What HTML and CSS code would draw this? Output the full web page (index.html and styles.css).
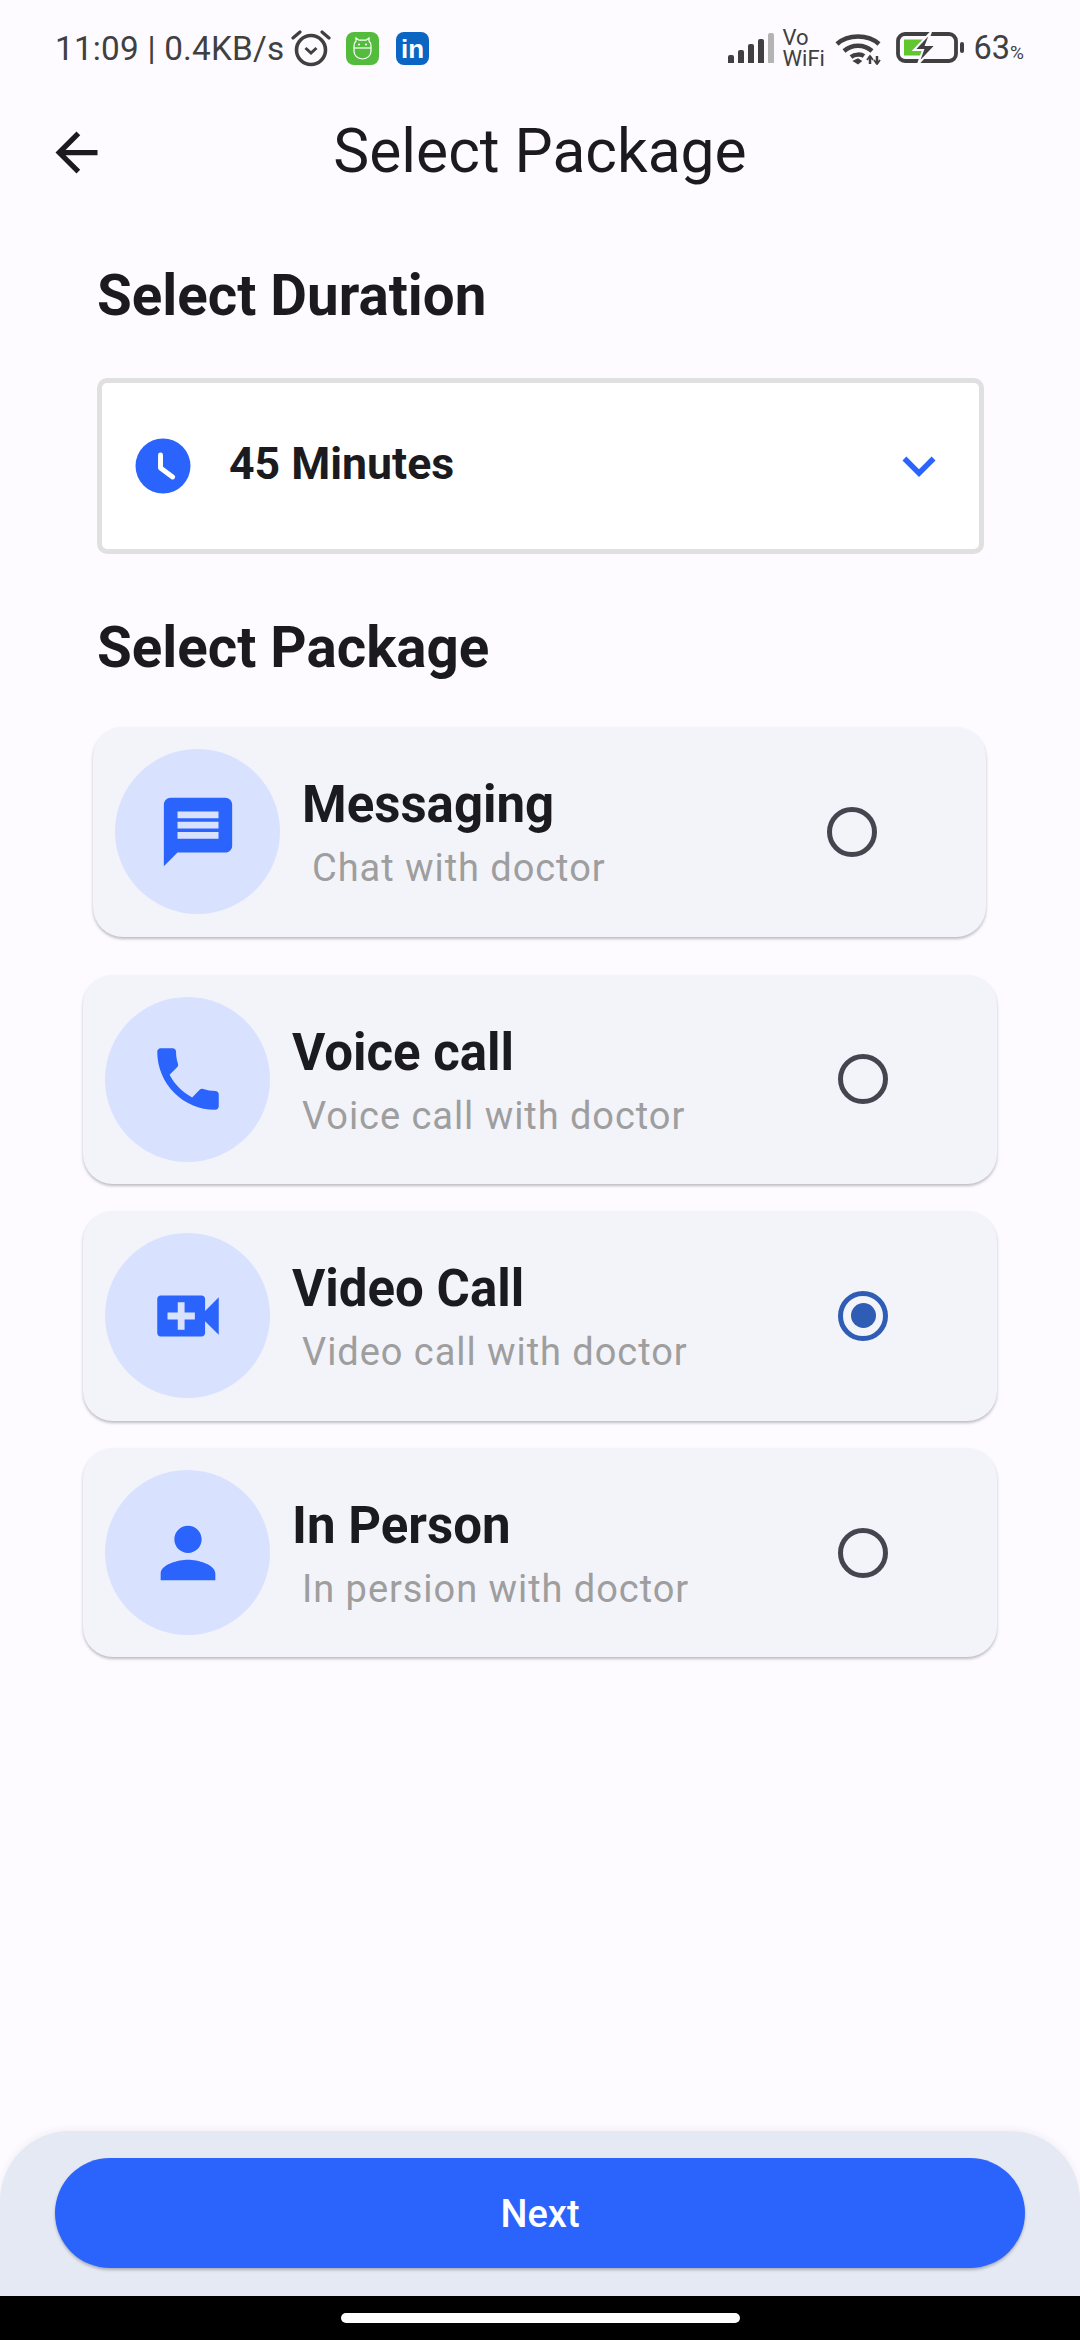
FILE: index.html
```html
<!DOCTYPE html>
<html>

<head>
    <meta charset="utf-8">
    <meta name="viewport" content="width=device-width, initial-scale=1">
    <title>Select Package</title>
    <link rel="stylesheet" href="styles.css">
</head>

<body>
    <div id="screen">
        <div class="status-bar">
            <div class="status-left">
                <span class="status-time">11:09 | 0.4KB/s</span>
                <svg class="ic-alarm" viewBox="0 0 40 38" fill="none" stroke="#404040">
                    <circle cx="20" cy="21" r="14.5" stroke-width="3.6"/>
                    <path d="M14.5 19l5.5 5 5.5-5" stroke-width="3"/>
                    <path d="M2 9l7-6M38 9l-7-6" stroke-width="3.2" stroke-linecap="round"/>
                </svg>
                <svg class="ic-app" viewBox="0 0 33 33">
                    <rect width="33" height="33" rx="8" fill="#54BC3C"/>
                    <g fill="none" stroke="#fff" stroke-width="1.2">
                        <path d="M10 9V6l3 2.2h7L23 6v3c1.4 1.4 2 3 2 5v5c0 4.5-3.5 8-8.500 8S8 23.500 8 19v-5c0-2 .6-3.600 2-5z"/>
                        <path d="M8 16h17"/>
                    </g>
                    <circle cx="13" cy="12.500" r="1" fill="#fff"/>
                    <circle cx="20" cy="12.500" r="1" fill="#fff"/>
                </svg>
                <svg class="ic-app ic-linkedin" viewBox="0 0 33 33">
                    <rect width="33" height="33" rx="8" fill="#0A66C2"/>
                    <text x="5" y="26" class="linkedin-text">in</text>
                </svg>
            </div>
            <div class="status-right">
                <div class="signal">
                    <i class="bar-1"></i><i class="bar-2"></i><i class="bar-3"></i><i class="bar-4"></i><i class="bar-5"></i>
                </div>
                <div class="vowifi">Vo<br>WiFi</div>
                <svg class="ic-wifi" viewBox="0 0 46 33" fill="none" stroke="#404040" stroke-width="4.500">
                    <path d="M2 12C13 2 33 2 44 12"/>
                    <path d="M9 19c8-7 20-7 28 0"/>
                    <path d="M16 25c4-3 10-3 13-1"/>
                    <path d="M19 29l4-2 3 2-3 2.500z" fill="#404040" stroke-width="1.500"/>
                    <path d="M35 24v8M42 24v8" stroke-width="2.500"/>
                    <path d="M32 28l3-4 3 4M39 28l3 4 3-4" stroke-width="1.800"/>
                </svg>
                <div class="battery">
                    <svg viewBox="0 0 68 32" width="68" height="32">
                        <rect x="2" y="2" width="58" height="27" rx="7" fill="none" stroke="#404040" stroke-width="3.800"/>
                        <rect x="8" y="7.500" width="23" height="16" fill="#62C630"/>
                        <rect x="64" y="10" width="4" height="11" rx="2" fill="#404040"/>
                        <path d="M35 0L18 18h9l-5 14 18-19h-10z" fill="#404040" stroke="#FDFBFF" stroke-width="2"/>
                    </svg>
                </div>
                <span class="battery-pct">63<small>%</small></span>
            </div>
        </div>

        <div class="app-bar">
            <svg class="back-icon" viewBox="0 0 24 24"><path d="M20 11H7.830l5.590-5.590L12 4l-8 8 8 8 1.410-1.410L7.830 13H20v-2z"/></svg>
            <h1 class="page-title">Select Package</h1>
        </div>

        <h2 class="section-title first">Select Duration</h2>
        <div class="duration-select">
            <svg class="clock-icon" viewBox="0 0 24 24">
                <circle cx="12" cy="12" r="10"/>
                <path class="clock-hand" d="M11.100 8v4.700L15.500 16"/>
            </svg>
            <span class="duration-text">45 Minutes</span>
            <svg class="chevron-icon" viewBox="0 0 24 24"><path d="M16.590 8.590L12 13.170 7.410 8.590 6 10l6 6 6-6z"/></svg>
        </div>

        <h2 class="section-title second">Select Package</h2>

        <div class="packages">
            <div class="package-card narrow">
                <div class="icon-circle">
                    <svg viewBox="0 0 24 24"><path d="M20 2H4c-1.100 0-1.990.9-1.990 2L2 22l4-4h14c1.100 0 2-.9 2-2V4c0-1.100-.9-2-2-2zm-2 12H6v-2h12v2zm0-3H6V9h12v2zm0-3H6V6h12v2z"/></svg>
                </div>
                <div class="package-info">
                    <div class="package-name">Messaging</div>
                    <div class="package-desc">Chat with doctor</div>
                </div>
                <div class="radio"></div>
            </div>
            <div class="package-card">
                <div class="icon-circle">
                    <svg viewBox="0 0 24 24"><path d="M6.620 10.790c1.440 2.830 3.760 5.140 6.590 6.590l2.200-2.200c.27-.27.67-.36 1.020-.24 1.120.37 2.330.57 3.570.57.55 0 1 .45 1 1V20c0 .55-.45 1-1 1-9.390 0-17-7.610-17-17 0-.55.45-1 1-1h3.500c.55 0 1 .45 1 1 0 1.250.2 2.450.57 3.570.11.35.03.74-.25 1.020l-2.200 2.200z"/></svg>
                </div>
                <div class="package-info">
                    <div class="package-name">Voice call</div>
                    <div class="package-desc">Voice call with doctor</div>
                </div>
                <div class="radio"></div>
            </div>
            <div class="package-card">
                <div class="icon-circle">
                    <svg viewBox="0 0 24 24"><path d="M17 10.500V7c0-.55-.45-1-1-1H4c-.55 0-1 .45-1 1v10c0 .55.45 1 1 1h12c.55 0 1-.45 1-1v-3.500l4 4v-11l-4 4zM14 13h-3v3H9v-3H6v-2h3V8h2v3h3v2z"/></svg>
                </div>
                <div class="package-info">
                    <div class="package-name">Video Call</div>
                    <div class="package-desc">Video call with doctor</div>
                </div>
                <div class="radio selected"></div>
            </div>
            <div class="package-card">
                <div class="icon-circle">
                    <svg viewBox="0 0 24 24"><path d="M12 12c2.210 0 4-1.790 4-4s-1.790-4-4-4-4 1.790-4 4 1.790 4 4 4zm0 2c-2.670 0-8 1.340-8 4v2h16v-2c0-2.660-5.330-4-8-4z"/></svg>
                </div>
                <div class="package-info">
                    <div class="package-name">In Person</div>
                    <div class="package-desc">In persion with doctor</div>
                </div>
                <div class="radio"></div>
            </div>
        </div>

        <div class="bottom-panel">
            <button class="next-btn">Next</button>
        </div>
        <div class="nav-bar"><div class="home-pill"></div></div>
    </div>
</body>

</html>
```

FILE: styles.css
```css
* {
    box-sizing: border-box;
}

body {
    margin: 0;
    font-family: Roboto, "Noto Sans", sans-serif;
    background-color: #FDFBFF;
    color: #1B1B1F;
}

#screen {
    width: 1080px;
    height: 2340px;
    display: flex;
    flex-direction: column;
    overflow: hidden;
}

/* status bar */
.status-bar {
    height: 96px;
    flex: none;
    padding: 0 56px 0 55px;
    display: flex;
    justify-content: space-between;
    align-items: center;
    color: #404040;
}

.status-left,
.status-right {
    display: flex;
    align-items: center;
}

.status-time {
    font-size: 33.300px;
    letter-spacing: 0.2px;
}

.ic-alarm {
    width: 40px;
    height: 38px;
    margin-left: 7px;
}

.ic-app {
    width: 33px;
    height: 33px;
    margin-left: 15px;
}

.ic-linkedin {
    margin-left: 17px;
}

.linkedin-text {
    font-family: "Liberation Sans", sans-serif;
    font-weight: 700;
    font-size: 26px;
    fill: #fff;
}

.signal {
    display: flex;
    align-items: flex-end;
    gap: 4px;
    height: 30px;
}

.signal i {
    display: block;
    width: 6px;
    background-color: #404040;
    border-radius: 2px 2px 0 0;
}

.signal .bar-1 { height: 8px; }
.signal .bar-2 { height: 13px; }
.signal .bar-3 { height: 19px; }
.signal .bar-4 { height: 24px; }
.signal .bar-5 { height: 30px; background-color: #B4B4B4; }

.vowifi {
    margin-left: 9px;
    width: 41px;
    font-size: 22px;
    line-height: 21px;
}

.ic-wifi {
    width: 46px;
    height: 33px;
    margin-left: 11px;
}

.battery {
    margin-left: 15px;
    height: 32px;
}

.battery svg {
    display: block;
}

.battery-pct {
    margin-left: 10px;
    font-size: 32.500px;
}

.battery-pct small {
    font-size: 19px;
}

/* app bar */
.app-bar {
    height: 112px;
    flex: none;
    padding-left: 45px;
    display: grid;
    grid-template-columns: 63px 1fr 108px;
    align-items: center;
}

.back-icon {
    width: 63px;
    height: 63px;
    fill: #1B1B1F;
}

.page-title {
    margin: 0;
    padding-bottom: 2px;
    text-align: center;
    font-size: 60.500px;
    font-weight: 400;
}

/* headings */
.section-title {
    margin: 0 0 0 97px;
    height: 60px;
    line-height: 60px;
    font-size: 56.500px;
    font-weight: 700;
}

.section-title.first {
    margin-top: 58px;
}

.section-title.second {
    margin-top: 64px;
}

/* duration dropdown */
.duration-select {
    margin: 52px 0 0 97px;
    width: 887px;
    height: 176px;
    flex: none;
    background-color: #fff;
    border: 5px solid #E0E0E0;
    border-radius: 10px;
    padding: 0 27px 0 28px;
    display: flex;
    align-items: center;
}

.clock-icon {
    width: 66px;
    height: 66px;
    fill: #2B63FD;
    flex: none;
}

.clock-hand {
    fill: none;
    stroke: #fff;
    stroke-width: 1.800;
    stroke-linecap: round;
    stroke-linejoin: round;
}

.duration-text {
    margin-left: 33px;
    padding-bottom: 5px;
    font-size: 44.600px;
    font-weight: 700;
    flex: 1;
}

.chevron-icon {
    width: 66px;
    height: 66px;
    fill: #2B63FD;
    flex: none;
}

/* package cards */
.packages {
    margin-top: 49px;
    display: flex;
    flex-direction: column;
    gap: 27px;
}

.package-card {
    margin: 0 83px;
    height: 209.600px;
    flex: none;
    background-color: #F3F3FA;
    border-radius: 30px;
    box-shadow: 0 2px 3px rgba(0, 0, 0, 0.25);
    padding: 0 109px 0 22px;
    display: flex;
    align-items: center;
}

.package-card.narrow {
    margin: 0 94px 11px 93px;
}

.icon-circle {
    width: 165px;
    height: 165px;
    flex: none;
    border-radius: 50%;
    background-color: #D8E2FF;
    display: flex;
    align-items: center;
    justify-content: center;
}

.icon-circle svg {
    width: 82px;
    height: 82px;
    fill: #2B63FD;
}

.package-info {
    flex: 1;
    margin-left: 22px;
    padding-top: 3px;
}

.package-name {
    font-size: 51px;
    font-weight: 700;
    line-height: 60px;
}

.package-desc {
    margin-top: 10px;
    padding-left: 10px;
    font-size: 38px;
    line-height: 46px;
    letter-spacing: 0.950px;
    color: #9E9E9E;
}

.radio {
    width: 50px;
    height: 50px;
    flex: none;
    border: 5px solid #44464F;
    border-radius: 50%;
}

.radio.selected {
    border-color: #2F5DB5;
    padding: 7.500px;
}

.radio.selected::after {
    content: "";
    display: block;
    width: 25px;
    height: 25px;
    border-radius: 50%;
    background-color: #2F5DB5;
}

/* bottom */
.bottom-panel {
    margin-top: auto;
    height: 165px;
    flex: none;
    background-color: #E4E9F3;
    border-radius: 70px 70px 0 0;
    box-shadow: 0 -2px 8px rgba(0, 0, 0, 0.05);
    padding: 27px 55px 0;
}

.next-btn {
    display: block;
    width: 100%;
    height: 110px;
    padding-top: 3px;
    border: none;
    border-radius: 55px;
    background-color: #2B63FD;
    box-shadow: 0 2px 3px rgba(0, 0, 0, 0.25);
    color: #fff;
    font-family: Roboto, sans-serif;
    font-size: 38px;
    font-weight: 500;
}

.nav-bar {
    height: 44px;
    flex: none;
    background-color: #000;
    display: flex;
    justify-content: center;
    padding-top: 17px;
}

.home-pill {
    width: 399px;
    height: 10px;
    border-radius: 5px;
    background-color: #fff;
}
```
